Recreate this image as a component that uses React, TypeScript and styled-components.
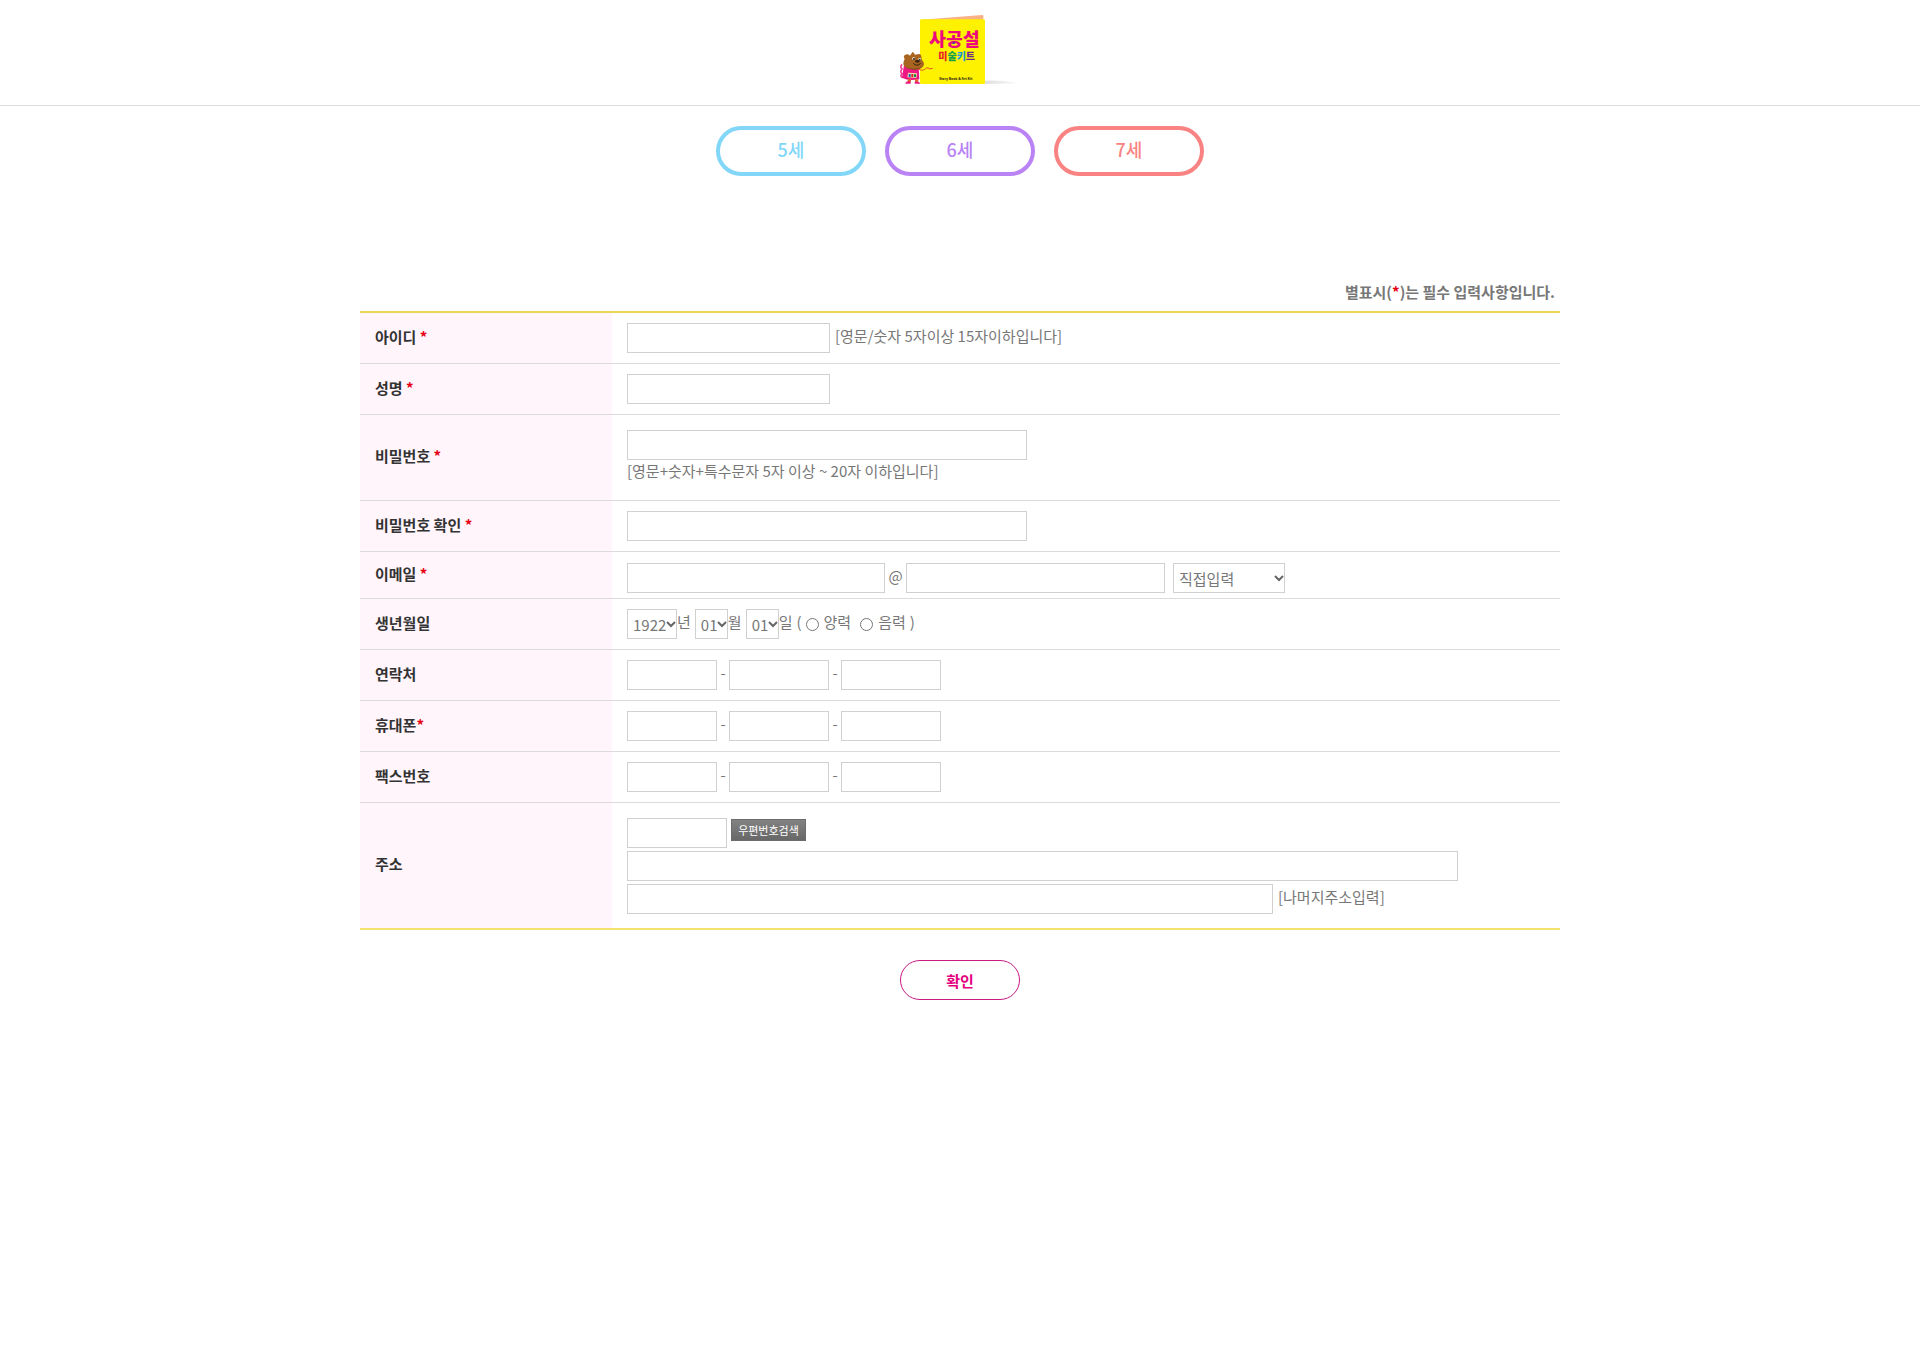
import React from 'react';
import styled, { createGlobalStyle } from 'styled-components';

const GlobalStyle = createGlobalStyle`
  *, *::before, *::after { box-sizing: border-box; }
  body {
    margin: 0;
    background: #fff;
    color: #777;
    font-family: "Noto Sans CJK KR", sans-serif;
    font-size: 15px;
    line-height: 25px;
  }
  input, select, button { font: inherit; color: inherit; }
`;

const Header = styled.header`
  display: flex;
  justify-content: center;
  border-bottom: 1px solid #dcdcdc;
`;

const HomeLink = styled.a`
  display: block;
  line-height: 0;
`;

const AgeNav = styled.nav`
  display: flex;
  justify-content: center;
  gap: 19px;
  margin-top: 20px;
`;

const AgeLink = styled.a<{ $color: string }>`
  display: flex;
  align-items: center;
  justify-content: center;
  width: 150px;
  height: 50px;
  padding-bottom: 4px;
  border: 4px solid ${(p) => p.$color};
  border-radius: 25px;
  color: ${(p) => p.$color};
  font-size: 18px;
  font-weight: 500;
  text-decoration: none;
`;

const Main = styled.main`
  max-width: 1200px;
  margin: 103px auto 0;
`;

const Notice = styled.p`
  margin: 0;
  padding: 0 5px 7px 0;
  text-align: right;
  font-weight: 700;
`;

const Star = styled.span`
  color: #e60012;
`;

const FormTable = styled.table`
  width: 100%;
  border-collapse: separate;
  border-spacing: 0;
  border-top: 2px solid #ebd650;
  border-bottom: 2px solid #f3e36c;
`;

const Row = styled.tr`
  &:not(:last-child) > * { border-bottom: 1px solid #dcdadd; }
`;

const HeadCell = styled.th`
  width: 21%;
  padding: 0 0 4px 15px;
  background: #fff5fb;
  color: #333;
  font-weight: 700;
  text-align: left;
`;

const Cell = styled.td<{ $pad?: string }>`
  padding: ${(p) => p.$pad ?? '10px 0'};
  padding-left: 15px;
`;

const Line = styled.div<{ $gap?: number }>`
  display: flex;
  align-items: center;
  gap: ${(p) => p.$gap ?? 5}px;
  & + & { margin-top: 3px; }
`;

const TextInput = styled.input<{ $w: number }>`
  display: block;
  width: ${(p) => p.$w}px;
  max-width: 100%;
  height: 30px;
  padding: 0 5px;
  border: 1px solid #d0d0d0;
  border-radius: 0;
  background: #fff;
`;

const chevron =
  "url(\"data:image/svg+xml,%3Csvg xmlns='http://www.w3.org/2000/svg' width='10' height='8' viewBox='0 0 10 8'%3E%3Cpath d='M1 2l4 4 4-4' fill='none' stroke='%23666' stroke-width='2'/%3E%3C/svg%3E\")";

const Select = styled.select<{ $w: number }>`
  appearance: none;
  width: ${(p) => p.$w}px;
  height: 30px;
  padding: 0 0 0 5px;
  border: 1px solid #d0d0d0;
  border-radius: 0;
  background: #fff ${chevron} right center no-repeat;
`;

const Hint = styled.span`
  display: block;
  padding-bottom: 5px;
  line-height: 22px;
`;

const BlockHint = styled.p`
  margin: 0;
  height: 25px;
  line-height: 22px;
`;

const Dash = styled(Hint)`
  width: 6px;
  text-align: center;
`;

const At = styled(Hint)`
  width: 15px;
  text-align: center;
`;

const DatePart = styled.label`
  display: flex;
  align-items: center;
  margin-right: 4px;
`;

const Calendar = styled.div`
  display: flex;
  align-items: center;
  gap: 4px;
`;

const RadioLabel = styled.label`
  display: flex;
  align-items: center;
  gap: 5px;
  & + & { margin-left: 5px; }
`;

const Radio = styled.input`
  width: 13px;
  height: 13px;
  margin: 0;
`;

const EmailDomain = styled.div`
  display: flex;
  gap: 8px;
`;

const ZipButton = styled.button`
  align-self: flex-start;
  width: 75px;
  height: 22px;
  margin-top: 1px;
  padding: 0;
  border: 1px solid #6c6c6c;
  background: linear-gradient(#828282, #686868);
  color: #fff;
  font-size: 11px;
  line-height: 18px;
`;

const Actions = styled.div`
  display: flex;
  justify-content: center;
  margin-top: 30px;
`;

const SubmitButton = styled.button`
  width: 120px;
  height: 40px;
  padding: 0;
  border: 1px solid #cb1a81;
  border-radius: 20px;
  background: #fff;
  color: #e4007f;
  font-weight: 700;
`;

const Logo = () => (
  <svg width="150" height="105" viewBox="15 0 450 315" role="img" aria-label="사공설 미술키트">
    <defs>
      <linearGradient id="shade" x1="0" x2="1">
        <stop offset="0" stopColor="#dedede" />
        <stop offset="1" stopColor="#fff" />
      </linearGradient>
    </defs>
    <path d="M314 242 Q370 240 425 250 L314 252Z" fill="url(#shade)" />
    <path d="M124 59 L306 45 Q310 45 310 49 V62 H124Z" fill="#f7b184" />
    <rect x="120" y="58" width="195" height="194" rx="4" fill="#fff200" />
    <g fontFamily="Noto Sans CJK KR, sans-serif" fontWeight="900" textAnchor="middle">
      <text x="223" y="138" fontSize="55" fill="#ec0a7c">사공설</text>
      <text x="230" y="179" fontSize="30">
        <tspan fill="#e8202a">미</tspan>
        <tspan fill="#18a04a">술</tspan>
        <tspan fill="#1c9ad6">키</tspan>
        <tspan fill="#6b2c91">트</tspan>
      </text>
      <text x="227" y="239" fontSize="10" fill="#3a3418">Story Book &amp; Art Kit</text>
    </g>
    <circle cx="221" cy="129" r="4" fill="#5b3aa0" />
    <path d="M66 193 q-7 8 0 14 q-7 8 0 14 q-7 8 2 12" fill="none" stroke="#ee3f97" strokeWidth="5" />
    <path d="M72 196 L66 233 Q84 244 118 238 L116 200Z" fill="#ed1683" />
    <path d="M74 176 Q68 168 76 164 Q84 161 90 167 L97 157 Q99 154 101 158 L105 164 L113 163 Q122 160 124 168 Q124 174 126 180 Q136 190 129 200 Q118 211 94 208 Q68 204 70 188Z" fill="#a9651f" />
    <path d="M76 200 Q96 212 126 202 Q114 211 94 208Q82 206 76 200Z" fill="#6e3b14" />
    <circle cx="101" cy="176" r="4" fill="#fff" />
    <circle cx="119" cy="178" r="4" fill="#fff" />
    <circle cx="102" cy="177" r="3" fill="#221" />
    <circle cx="119" cy="179" r="3" fill="#221" />
    <ellipse cx="112" cy="184" rx="7" ry="4" fill="#37200f" />
    <path d="M100 190 Q110 201 122 190" fill="none" stroke="#37200f" strokeWidth="3" />
    <path d="M84 218 L111 220 L109 234 L82 232Z" fill="#f8d9a8" />
    <path d="M86 222 h6 v9 h-6z" fill="#1c6ab6" />
    <path d="M94 222 h6 v9 h-6z" fill="#d8202a" />
    <path d="M102 223 h6 v8 h-6z" fill="#188a4a" />
    <path d="M88 238 v8 M110 238 v8" stroke="#e0662c" strokeWidth="10" />
    <path d="M76 249 q4 -8 16 -4 v6 h-16z M104 245 h8 q9 1 8 6 h-16z" fill="#ed1683" />
    <path d="M116 208 Q130 214 136 206 Q146 200 148 207 L158 205" fill="none" stroke="#e8502a" strokeWidth="3" />
  </svg>
);

const range = (from: number, to: number) =>
  Array.from({ length: to - from + 1 }, (_, i) => String(from + i).padStart(2, '0'));

const Options = ({ from, to }: { from: number; to: number }) => (
  <>
    {range(from, to).map((v) => (
      <option key={v}>{v}</option>
    ))}
  </>
);

interface FieldProps {
  label: string;
  htmlFor: string;
  required?: boolean;
  tight?: boolean;
  pad?: string;
  children: React.ReactNode;
}

const Field = ({ label, htmlFor, required, tight, pad, children }: FieldProps) => (
  <Row>
    <HeadCell scope="row">
      <label htmlFor={htmlFor}>
        {label}
        {required && !tight && ' '}
        {required && <Star>*</Star>}
      </label>
    </HeadCell>
    <Cell $pad={pad}>{children}</Cell>
  </Row>
);

const PhoneInputs = ({ id, name }: { id: string; name: string }) => (
  <Line $gap={3}>
    <TextInput id={id} $w={90} type="tel" />
    <Dash>-</Dash>
    <TextInput $w={100} type="tel" aria-label={`${name} 2`} />
    <Dash>-</Dash>
    <TextInput $w={100} type="tel" aria-label={`${name} 3`} />
  </Line>
);

export default function App() {
  return (
    <>
      <GlobalStyle />
      <Header>
        <HomeLink href="#">
          <Logo />
        </HomeLink>
      </Header>
      <AgeNav>
        <AgeLink href="#" $color="#82d7f9">5세</AgeLink>
        <AgeLink href="#" $color="#b982f5">6세</AgeLink>
        <AgeLink href="#" $color="#f98282">7세</AgeLink>
      </AgeNav>
      <Main>
        <form onSubmit={(e) => e.preventDefault()}>
          <Notice>
            별표시(<Star>*</Star>)는 필수 입력사항입니다.
          </Notice>
          <FormTable>
            <tbody>
              <Field label="아이디" htmlFor="userId" required>
                <Line>
                  <TextInput id="userId" $w={203} />
                  <Hint>[영문/숫자 5자이상 15자이하입니다]</Hint>
                </Line>
              </Field>
              <Field label="성명" htmlFor="userName" required>
                <TextInput id="userName" $w={203} />
              </Field>
              <Field label="비밀번호" htmlFor="pw" required pad="15px 0">
                <TextInput id="pw" type="password" $w={400} />
                <BlockHint>[영문+숫자+특수문자 5자 이상 ~ 20자 이하입니다]</BlockHint>
              </Field>
              <Field label="비밀번호 확인" htmlFor="pw2" required>
                <TextInput id="pw2" type="password" $w={400} />
              </Field>
              <Field label="이메일" htmlFor="email" required pad="11px 0 5px">
                <Line $gap={3}>
                  <TextInput id="email" $w={258} />
                  <At>@</At>
                  <EmailDomain>
                    <TextInput $w={259} aria-label="이메일 도메인" />
                    <Select $w={112} aria-label="도메인 선택">
                      <option>직접입력</option>
                    </Select>
                  </EmailDomain>
                </Line>
              </Field>
              <Field label="생년월일" htmlFor="birthYear">
                <Line $gap={0}>
                  <DatePart>
                    <Select id="birthYear" $w={50}><Options from={1922} to={2022} /></Select>
                    <Hint>년</Hint>
                  </DatePart>
                  <DatePart>
                    <Select $w={33}><Options from={1} to={12} /></Select>
                    <Hint>월</Hint>
                  </DatePart>
                  <DatePart>
                    <Select $w={33}><Options from={1} to={31} /></Select>
                    <Hint>일</Hint>
                  </DatePart>
                  <Calendar>
                    <Hint>(</Hint>
                    <RadioLabel>
                      <Radio type="radio" name="calendar" />
                      <Hint>양력</Hint>
                    </RadioLabel>
                    <RadioLabel>
                      <Radio type="radio" name="calendar" />
                      <Hint>음력</Hint>
                    </RadioLabel>
                    <Hint>)</Hint>
                  </Calendar>
                </Line>
              </Field>
              <Field label="연락처" htmlFor="tel">
                <PhoneInputs id="tel" name="연락처" />
              </Field>
              <Field label="휴대폰" htmlFor="mobile" required tight>
                <PhoneInputs id="mobile" name="휴대폰" />
              </Field>
              <Field label="팩스번호" htmlFor="fax">
                <PhoneInputs id="fax" name="팩스번호" />
              </Field>
              <Field label="주소" htmlFor="zip" pad="15px 0 14px">
                <Line $gap={4}>
                  <TextInput id="zip" $w={100} />
                  <ZipButton type="button">우편번호검색</ZipButton>
                </Line>
                <Line>
                  <TextInput $w={831} aria-label="기본주소" />
                </Line>
                <Line>
                  <TextInput id="address2" $w={646} aria-label="나머지주소" />
                  <Hint>[나머지주소입력]</Hint>
                </Line>
              </Field>
            </tbody>
          </FormTable>
          <Actions>
            <SubmitButton type="submit">확인</SubmitButton>
          </Actions>
        </form>
      </Main>
    </>
  );
}
